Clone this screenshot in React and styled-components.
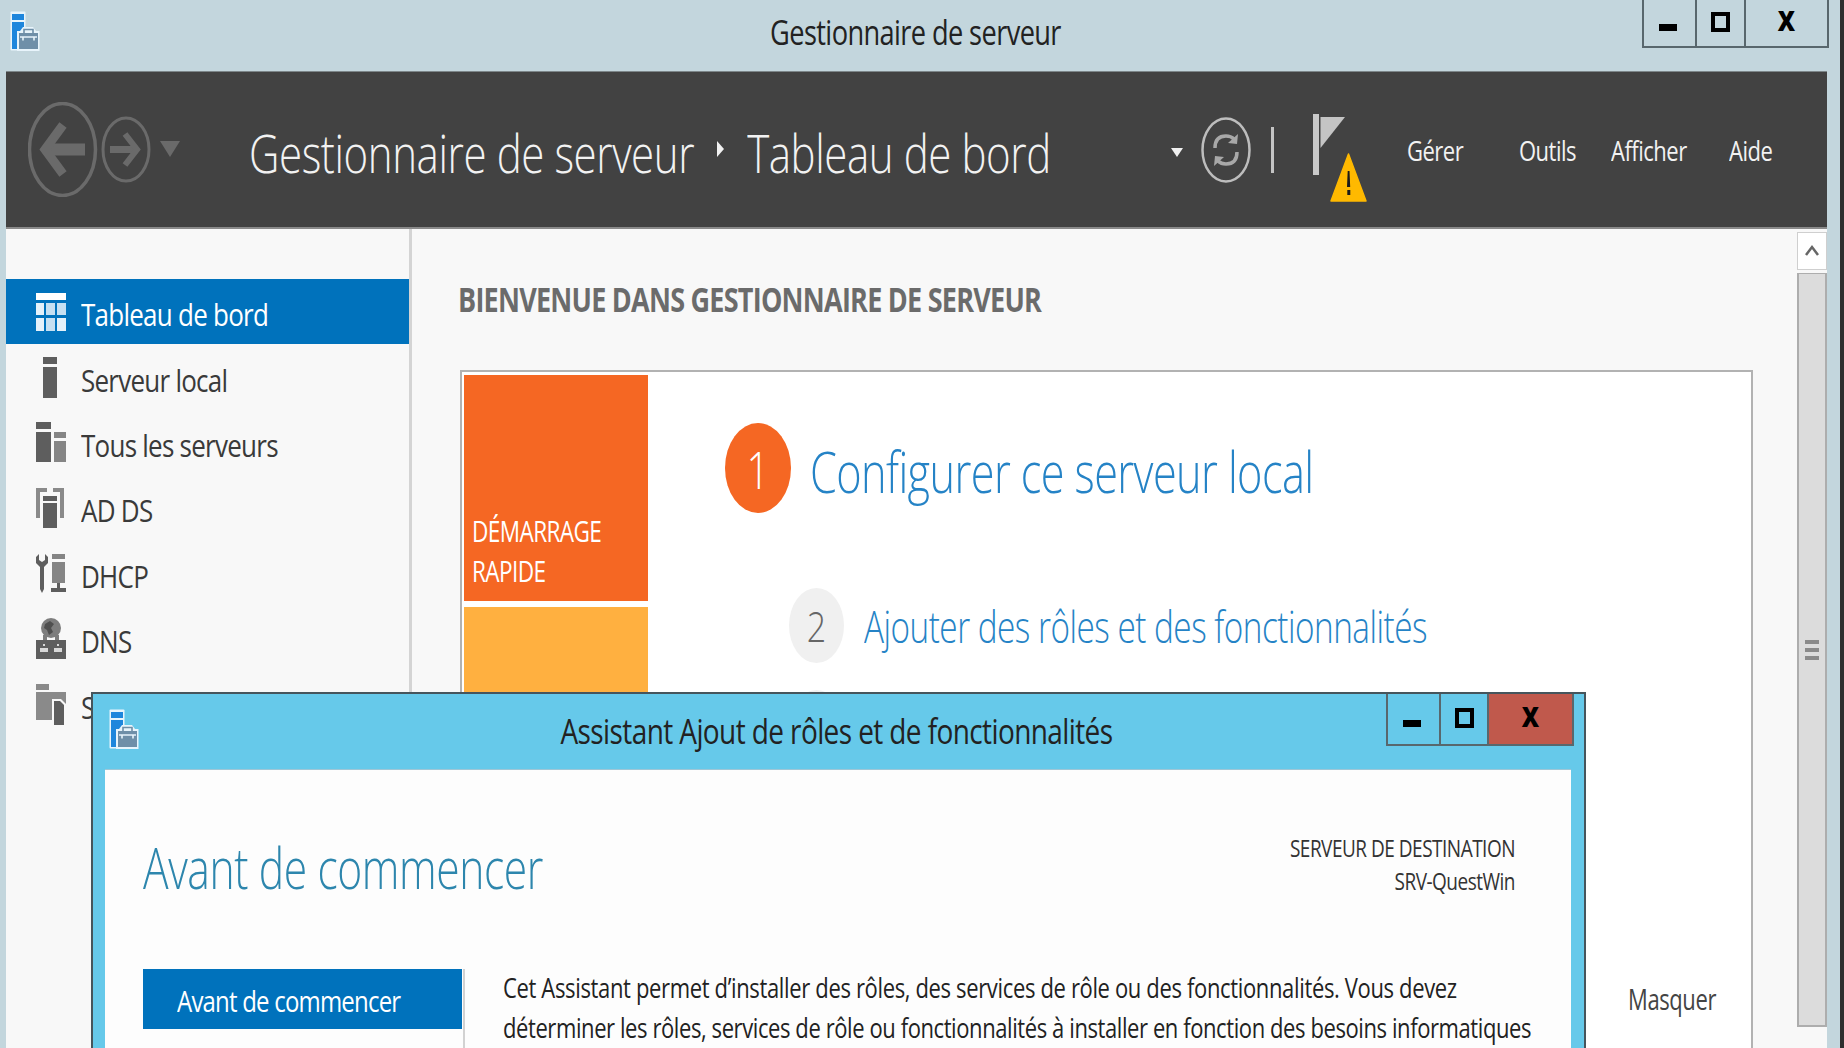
import React from 'react';
import styled, { createGlobalStyle, css } from 'styled-components';

const sidebarItems = [
  { label: 'Tableau de bord', icon: 'dashboard', active: true },
  { label: 'Serveur local', icon: 'local' },
  { label: 'Tous les serveurs', icon: 'all' },
  { label: 'AD DS', icon: 'adds' },
  { label: 'DHCP', icon: 'dhcp' },
  { label: 'DNS', icon: 'dns' },
  { label: 'Services', icon: 'files' },
];

const AppIcon = () => (
  <svg width="30" height="40" viewBox="0 0 30 40">
    <rect x="0.5" y="0.5" width="15" height="39" rx="1" fill="#e8f4fb" />
    <rect x="2" y="3" width="12" height="6" fill="#1e86dc" />
    <rect x="2" y="11" width="12" height="27" fill="#1e86dc" />
    <path d="M7 20h3l3-4h10l3 4h3.500v20H7z" fill="#e8f4fb" />
    <path d="M9 22h19v16H9z" fill="#6f8fa8" />
    <path d="M14 22v-3.500h9V22" fill="none" stroke="#6f8fa8" strokeWidth="1.6" />
    <path d="M10 26h17M13 26v3.500M24 26v3.500" fill="none" stroke="#e8f4fb" strokeWidth="1.6" />
  </svg>
);

const NavIcons = () => (
  <svg width="152" height="95" viewBox="0 0 152 95" fill="none" stroke="#6a6a6a">
    <ellipse cx="34.500" cy="47.500" rx="33" ry="46" strokeWidth="3.500" />
    <path d="M57 47.500H22" strokeWidth="12" />
    <path d="M35 23L17 47.500L35 72" strokeWidth="9" />
    <ellipse cx="98" cy="47.500" rx="23" ry="31.500" strokeWidth="3" />
    <path d="M82 47.500h26" strokeWidth="7" />
    <path d="M97 32l12 15.500l-12 15.500" strokeWidth="6" />
    <path d="M132 39h20l-10 16z" fill="#6a6a6a" stroke="none" />
  </svg>
);

const RefreshIcon = () => (
  <svg width="50" height="66" viewBox="0 0 50 66" fill="none">
    <ellipse cx="25" cy="33" rx="23.500" ry="31.500" stroke="#bdbdbd" strokeWidth="2.500" />
    <path d="M14 31C14 22 19 19 25 19C28 19 31 20 33 22" stroke="#a8a8a8" strokeWidth="3.500" />
    <path d="M27 26l9 1l1-10z" fill="#a8a8a8" />
    <path d="M36 35C36 44 31 47 25 47C22 47 19 46 17 44" stroke="#a8a8a8" strokeWidth="3.500" />
    <path d="M23 40l-9-1l-1 10z" fill="#a8a8a8" />
  </svg>
);

const FlagIcon = () => (
  <svg width="54" height="89" viewBox="0 0 54 89">
    <rect x="0" y="0" width="6" height="61" fill="#c9c9c9" />
    <path d="M7.500 3H32L7.500 34z" fill="#c4c4c4" />
    <path d="M35.500 40L53 87H18z" fill="#ffb900" stroke="#ffb900" strokeWidth="1.500" strokeLinejoin="round" />
    <path d="M34.700 57h1.800l.7 16H34zM34.300 76h3v5h-3z" fill="#1a1a1a" />
  </svg>
);

const Chevron = () => (
  <svg width="16" height="14" viewBox="0 0 16 14" fill="none" stroke="#666" strokeWidth="2.500">
    <path d="M2 11l6-8l6 8" />
  </svg>
);

const SideIcon = ({ name }) => {
  if (name === 'dashboard') {
    return (
      <svg width="30" height="38" viewBox="0 0 30 38">
        <rect width="30" height="7" fill="#fff" />
        <path d="M0 10h8v12H0zM10 10h9v12h-9zM21 10h9v12h-9zM0 25h8v13H0zM10 25h9v13h-9zM21 25h9v13h-9z" fill="#c6e0f2" />
        <path d="M0 10h8v12H0zM21 25h9v13h-9zM0 25h8v13H0z" fill="#e4f1fa" />
      </svg>
    );
  }
  if (name === 'local') {
    return (
      <svg width="30" height="41" viewBox="0 0 30 41">
        <rect x="7" y="0" width="14" height="7" fill="#5e5e5e" />
        <rect x="7" y="10" width="14" height="31" fill="#5e5e5e" />
      </svg>
    );
  }
  if (name === 'all') {
    return (
      <svg width="30" height="40" viewBox="0 0 30 40">
        <path d="M0 0h15v7H0zM0 10h15v30H0z" fill="#5e5e5e" />
        <path d="M18 10h12v6H18zM18 19h12v21H18z" fill="#858585" />
      </svg>
    );
  }
  if (name === 'adds') {
    return (
      <svg width="30" height="40" viewBox="0 0 30 40">
        <path d="M0 0h11v4H4v26H0zM17 0h11v30h-4V4h-7z" fill="#8a8a8a" />
        <path d="M7 8h14v5H7zM7 15h14v25H7z" fill="#5e5e5e" />
      </svg>
    );
  }
  if (name === 'dhcp') {
    return (
      <svg width="30" height="39" viewBox="0 0 30 39">
        <path d="M3 0v6l3 2l3-2V0l3 3v6l-4 4v22l-2 4l-2-4V13L0 9V3z" fill="#5e5e5e" />
        <path d="M16 0h13v5H16zM16 8h13v21H16z" fill="#858585" />
        <path d="M21 29h3v5h6v4H15v-4h6z" fill="#5e5e5e" />
      </svg>
    );
  }
  if (name === 'dns') {
    return (
      <svg width="30" height="41" viewBox="0 0 30 41">
        <circle cx="15" cy="10" r="10" fill="#7d7d7d" />
        <path d="M9 6l5-3l4 3l-3 4l2 4l-4 3l-2-5l-3-2z" fill="#4f4f4f" />
        <path d="M7 17v7h4v-7zM19 17v7h4v-7z" fill="#7d7d7d" />
        <rect y="22" width="30" height="19" fill="#5e5e5e" />
        <path d="M4 30h8v4H4zM18 30h8v4h-8zM7 26h2v2H7zM21 26h2v2h-2z" fill="#d8d8d8" />
      </svg>
    );
  }
  return (
    <svg width="30" height="41" viewBox="0 0 30 41">
      <path d="M0 0h13v6H0zM0 8h30v28H0z" fill="#8a8a8a" />
      <path d="M16 15h9l5 5v21H16z" fill="#f8f8f8" />
      <path d="M18 17h6l4 4v20H18z" fill="#5e5e5e" />
    </svg>
  );
};

const App = () => (
  <Page>
    <GlobalStyle />
    <TitleBar>
      <AppIcon />
      <TitleText>Gestionnaire de serveur</TitleText>
      <Controls $h={48}>
        <CtrlButton $w={51}><MinGlyph /></CtrlButton>
        <CtrlButton $w={49}><MaxGlyph /></CtrlButton>
        <CtrlButton $w={83}><CloseGlyph>X</CloseGlyph></CtrlButton>
      </Controls>
    </TitleBar>

    <Shell>
      <Header>
        <NavIcons />
        <Crumb>Gestionnaire de serveur</Crumb>
        <CrumbArrow />
        <Crumb $current>Tableau de bord</Crumb>
        <Tools>
          <SmallCaret />
          <RefreshIcon />
          <Divider />
          <FlagSlot><FlagIcon /></FlagSlot>
          <Menu>
            <MenuItem $w={112}>Gérer</MenuItem>
            <MenuItem $w={92}>Outils</MenuItem>
            <MenuItem $w={118}>Afficher</MenuItem>
            <MenuItem $w={60}>Aide</MenuItem>
          </Menu>
        </Tools>
      </Header>

      <Workspace>
        <Sidebar>
          {sidebarItems.map((item) => (
            <SideRow key={item.icon} $active={item.active}>
              <SideIconSlot><SideIcon name={item.icon} /></SideIconSlot>
              <SideLabel>{item.label}</SideLabel>
            </SideRow>
          ))}
        </Sidebar>

        <Main>
          <Welcome>BIENVENUE DANS GESTIONNAIRE DE SERVEUR</Welcome>
          <QuickBox>
            <Tiles>
              <OrangeTile>
                <TileLine>DÉMARRAGE</TileLine>
                <TileLine>RAPIDE</TileLine>
              </OrangeTile>
              <YellowTile />
            </Tiles>
            <Steps>
              <StepOne>
                <BigBullet><BigDigit>1</BigDigit></BigBullet>
                <BigLink>Configurer ce serveur local</BigLink>
              </StepOne>
              <StepTwo>
                <SmallBullet><SmallDigit>2</SmallDigit></SmallBullet>
                <SmallLink>Ajouter des rôles et des fonctionnalités</SmallLink>
              </StepTwo>
              <StepThree><SmallBullet /></StepThree>
            </Steps>
            <HideColumn><HideLink>Masquer</HideLink></HideColumn>
          </QuickBox>
        </Main>

        <Scrollbar>
          <ScrollUp><Chevron /></ScrollUp>
          <ScrollThumb>
            <Grip />
          </ScrollThumb>
        </Scrollbar>
      </Workspace>
    </Shell>

    <Dialog>
      <DialogBar>
        <AppIcon />
        <DialogTitle>Assistant Ajout de rôles et de fonctionnalités</DialogTitle>
        <Controls $h={52} $dialog>
          <CtrlButton $w={51}><MinGlyph /></CtrlButton>
          <CtrlButton $w={48}><MaxGlyph /></CtrlButton>
          <CtrlButton $w={85} $close><CloseGlyph>X</CloseGlyph></CtrlButton>
        </Controls>
      </DialogBar>
      <DialogBody>
        <DialogHead>
          <WizardTitle>Avant de commencer</WizardTitle>
          <Destination>
            <DestLine>SERVEUR DE DESTINATION</DestLine>
            <DestLine>SRV-QuestWin</DestLine>
          </Destination>
        </DialogHead>
        <WizardColumns>
          <WizardNav>
            <WizardNavItem>
              <WizardNavLabel>Avant de commencer</WizardNavLabel>
            </WizardNavItem>
          </WizardNav>
          <WizardText>
            <TextLine>Cet Assistant permet d’installer des rôles, des services de rôle ou des fonctionnalités. Vous devez</TextLine>
            <TextLine $tight>déterminer les rôles, services de rôle ou fonctionnalités à installer en fonction des besoins informatiques</TextLine>
          </WizardText>
        </WizardColumns>
      </DialogBody>
    </Dialog>
  </Page>
);

const GlobalStyle = createGlobalStyle`
  html, body {
    margin: 0;
    padding: 0;
    overflow: hidden;
    background: #c3d6dd;
    font-family: "Open Sans", "Noto Sans", sans-serif;
  }
  * { box-sizing: border-box; }
`;

// the reference text is stretched vertically, so every label goes through this
const tall = (y = 1.25, origin = 'left center') => css`
  display: inline-block;
  white-space: nowrap;
  transform: scaleY(${y});
  transform-origin: ${origin};
`;

const Page = styled.div`
  position: relative;
  width: 1844px;
  height: 1048px;
  overflow: hidden;
  display: flex;
  flex-direction: column;
  background: #c3d6dd;
  border-right: 4px solid #2e2e2e;
`;

const TitleBar = styled.div`
  height: 71px;
  flex: none;
  display: grid;
  grid-template-columns: 1fr auto 1fr;
  align-items: start;
  padding: 11px 11px 0 10px;
`;

const TitleText = styled.div`
  ${tall(1.25, 'center')};
  font-size: 27.200px;
  letter-spacing: -0.6px;
  color: #222;
  line-height: 42px;
  margin-right: 8px;
`;

const Controls = styled.div`
  position: absolute;
  top: 0;
  right: ${(p) => (p.$dialog ? '10px' : '11px')};
  height: ${(p) => p.$h}px;
  display: flex;
  border: 2px solid #58676d;
  border-top: none;
`;

const CtrlButton = styled.div`
  width: ${(p) => p.$w}px;
  display: flex;
  align-items: center;
  justify-content: center;
  background: ${(p) => (p.$close ? '#c0594c' : 'transparent')};
  & + & { border-left: 2px solid #58676d; }
`;

const MinGlyph = styled.span`
  display: block;
  width: 18px;
  height: 7px;
  margin: 9px 3px 0 0;
  background: #000;
`;

const MaxGlyph = styled.span`
  display: block;
  width: 19px;
  height: 20px;
  margin-top: -3px;
  border: 4px solid #000;
`;

const CloseGlyph = styled.span`
  ${tall(1.15, 'center')};
  font-size: 24px;
  font-weight: 800;
  line-height: 24px;
  color: #000;
  margin-top: -4px;
`;

const Shell = styled.div`
  flex: 1;
  display: flex;
  flex-direction: column;
  padding: 0 13px 0 6px;
  min-height: 0;
`;

const Header = styled.div`
  height: 158px;
  flex: none;
  display: flex;
  align-items: center;
  padding: 0 38px 0 22px;
  background: #424242;
  border-top: 1px solid #7d8689;
  border-bottom: 2px solid #8a8a8a;
`;

const Crumb = styled.div`
  ${tall(1.25)};
  font-size: 42px;
  font-weight: 300;
  letter-spacing: -0.4px;
  color: #f2f2f2;
  line-height: 50px;
  margin-left: ${(p) => (p.$current ? '23px' : '69px')};
  margin-top: 6px;
`;

const CrumbArrow = styled.span`
  width: 0;
  height: 0;
  margin-left: 23px;
  margin-top: -1px;
  border-left: 7px solid #f2f2f2;
  border-top: 8px solid transparent;
  border-bottom: 8px solid transparent;
`;

const Tools = styled.div`
  margin-left: auto;
  display: flex;
  align-items: center;
`;

const SmallCaret = styled.span`
  width: 0;
  height: 0;
  margin-right: 18px;
  margin-top: 6px;
  border-top: 9px solid #f0f0f0;
  border-left: 6px solid transparent;
  border-right: 6px solid transparent;
`;

const Divider = styled.span`
  width: 3px;
  height: 46px;
  margin-left: 20px;
  margin-right: 39px;
  background: #c4c4c4;
`;

const FlagSlot = styled.div`
  display: flex;
  margin-top: 17px;
`;

const Menu = styled.div`
  display: flex;
  margin-left: 40px;
`;

const MenuItem = styled.div`
  ${tall(1.25)};
  width: ${(p) => p.$w}px;
  font-size: 22px;
  letter-spacing: -0.5px;
  color: #f2f2f2;
  line-height: 30px;
  margin-top: 1px;
`;

const Workspace = styled.div`
  flex: 1;
  display: flex;
  min-height: 0;
  background: #f8f8f8;
`;

const Sidebar = styled.div`
  width: 406px;
  flex: none;
  padding: 50px 0 0;
  border-right: 3px solid #d4d4d4;
`;

const SideRow = styled.div`
  height: 65.400px;
  display: flex;
  align-items: center;
  gap: 15px;
  padding-left: 30px;
  background: ${(p) => (p.$active ? '#0072bc' : 'transparent')};
  color: ${(p) => (p.$active ? '#fff' : '#3a3a3a')};
`;

const SideIconSlot = styled.div`
  width: 30px;
  display: flex;
`;

const SideLabel = styled.span`
  ${tall(1.22)};
  font-size: 26px;
  letter-spacing: -0.75px;
  line-height: 34px;
  margin-top: 5px;
`;

const Main = styled.div`
  flex: 1;
  min-width: 0;
  padding: 55px 44px 0 48px;
  display: flex;
  flex-direction: column;
`;

const Welcome = styled.div`
  ${tall(1.25)};
  font-size: 27px;
  font-weight: 700;
  letter-spacing: -0.75px;
  line-height: 30px;
  color: #6b6b6b;
  margin-left: -2px;
`;

const QuickBox = styled.div`
  flex: 1;
  margin-top: 56px;
  display: flex;
  padding: 3px 0 0 2px;
  background: #fff;
  border: 2px solid #b2b2b2;
  border-bottom: none;
`;

const Tiles = styled.div`
  width: 184px;
  flex: none;
  display: flex;
  flex-direction: column;
  gap: 6px;
`;

const OrangeTile = styled.div`
  height: 226px;
  flex: none;
  display: flex;
  flex-direction: column;
  justify-content: flex-end;
  padding: 0 0 9px 8px;
  background: #f56723;
`;

const YellowTile = styled.div`
  flex: 1;
  background: #ffb040;
`;

const TileLine = styled.div`
  ${tall(1.27)};
  font-size: 22.600px;
  letter-spacing: -0.6px;
  line-height: 40px;
  color: #fff;
`;

const Steps = styled.div`
  flex: 1;
  padding: 48px 0 0 77px;
`;

const StepOne = styled.div`
  display: flex;
  align-items: center;
  gap: 19px;
`;

const StepTwo = styled.div`
  display: flex;
  align-items: center;
  gap: 20px;
  margin: 75px 0 0 64px;
`;

const StepThree = styled.div`
  margin: 27px 0 0 64px;
`;

const BigBullet = styled.div`
  width: 66px;
  height: 90px;
  flex: none;
  border-radius: 50%;
  display: flex;
  align-items: center;
  justify-content: center;
  background: #f56723;
`;

const BigDigit = styled.span`
  ${tall(1.3, 'center')};
  font-size: 40px;
  font-weight: 300;
  color: #fff;
`;

const SmallBullet = styled.div`
  width: 55px;
  height: 75px;
  flex: none;
  border-radius: 50%;
  display: flex;
  align-items: center;
  justify-content: center;
  background: #f0f0f0;
`;

const SmallDigit = styled.span`
  ${tall(1.25, 'center')};
  font-size: 34px;
  font-weight: 300;
  color: #666;
`;

const BigLink = styled.div`
  ${tall(1.33)};
  font-size: 43.300px;
  font-weight: 300;
  letter-spacing: -0.6px;
  color: #2583c6;
  margin-top: 6px;
`;

const SmallLink = styled.div`
  ${tall(1.35)};
  font-size: 33.300px;
  font-weight: 300;
  letter-spacing: -0.5px;
  color: #2583c6;
  margin-top: -2px;
`;

const HideColumn = styled.div`
  width: 123px;
  flex: none;
  padding-top: 606px;
`;

const HideLink = styled.div`
  ${tall(1.3)};
  font-size: 22px;
  letter-spacing: -0.4px;
  line-height: 34px;
  color: #444;
`;

const Scrollbar = styled.div`
  width: 30px;
  flex: none;
  padding-top: 3px;
  display: flex;
  flex-direction: column;
`;

const ScrollUp = styled.div`
  height: 38px;
  display: flex;
  align-items: center;
  justify-content: center;
  background: #fff;
  border: 1px solid #cfcfcf;
`;

const ScrollThumb = styled.div`
  height: 754px;
  margin-top: 3px;
  display: flex;
  flex-direction: column;
  align-items: center;
  padding-top: 366px;
  background: #dcdcdc;
  border: 2px solid #adadad;
  border-top-width: 1px;
`;

const Grip = styled.div`
  width: 14px;
  height: 21px;
  background: repeating-linear-gradient(to bottom, #8a8a8a 0 4px, #dcdcdc 4px 8px);
`;

const Dialog = styled.div`
  position: absolute;
  left: 91px;
  top: 692px;
  width: 1495px;
  height: 360px;
  display: flex;
  flex-direction: column;
  background: #66c9ea;
  border: 2px solid #46555c;
  border-bottom: none;
`;

const DialogBar = styled.div`
  height: 75px;
  flex: none;
  display: grid;
  grid-template-columns: 1fr auto 1fr;
  align-items: start;
  padding: 15px 0 0 16px;
`;

const DialogTitle = styled.div`
  ${tall(1.22, 'center')};
  font-size: 28px;
  letter-spacing: -0.6px;
  line-height: 44px;
  color: #222;
  margin-left: -20px;
`;

const DialogBody = styled.div`
  flex: 1;
  margin: 0 13px 0 12px;
  padding: 62px 0 0 38px;
  background: #fdfdfd;
  border-top: 1px solid #9fc6d6;
`;

const DialogHead = styled.div`
  display: flex;
  justify-content: space-between;
  align-items: flex-start;
  padding-right: 56px;
`;

const WizardTitle = styled.div`
  ${tall(1.35)};
  font-size: 42.600px;
  font-weight: 300;
  letter-spacing: -0.4px;
  line-height: 60px;
  margin-top: 4px;
  color: #2d86ad;
`;

const Destination = styled.div`
  display: flex;
  flex-direction: column;
  align-items: flex-end;
`;

const DestLine = styled.div`
  ${tall(1.25, 'right center')};
  font-size: 19px;
  letter-spacing: -0.5px;
  line-height: 33px;
  color: #333;
`;

const WizardColumns = styled.div`
  display: flex;
  margin-top: 71px;
`;

const WizardNav = styled.div`
  width: 322px;
  height: 90px;
  flex: none;
  border-right: 2px solid #d2d2d2;
`;

const WizardNavItem = styled.div`
  width: 319px;
  height: 60px;
  display: flex;
  align-items: center;
  padding-left: 34px;
  background: #0072bc;
`;

const WizardNavLabel = styled.span`
  ${tall(1.22)};
  font-size: 24px;
  letter-spacing: -0.8px;
  color: #fff;
  margin-top: 2px;
`;

const WizardText = styled.div`
  padding-left: 38px;
  margin-top: -2px;
`;

const TextLine = styled.div`
  ${tall(1.25)};
  display: block;
  font-size: 22px;
  letter-spacing: ${(p) => (p.$tight ? '-0.41px' : '-0.35px')};
  line-height: 40px;
  color: #222;
`;

export default App;
